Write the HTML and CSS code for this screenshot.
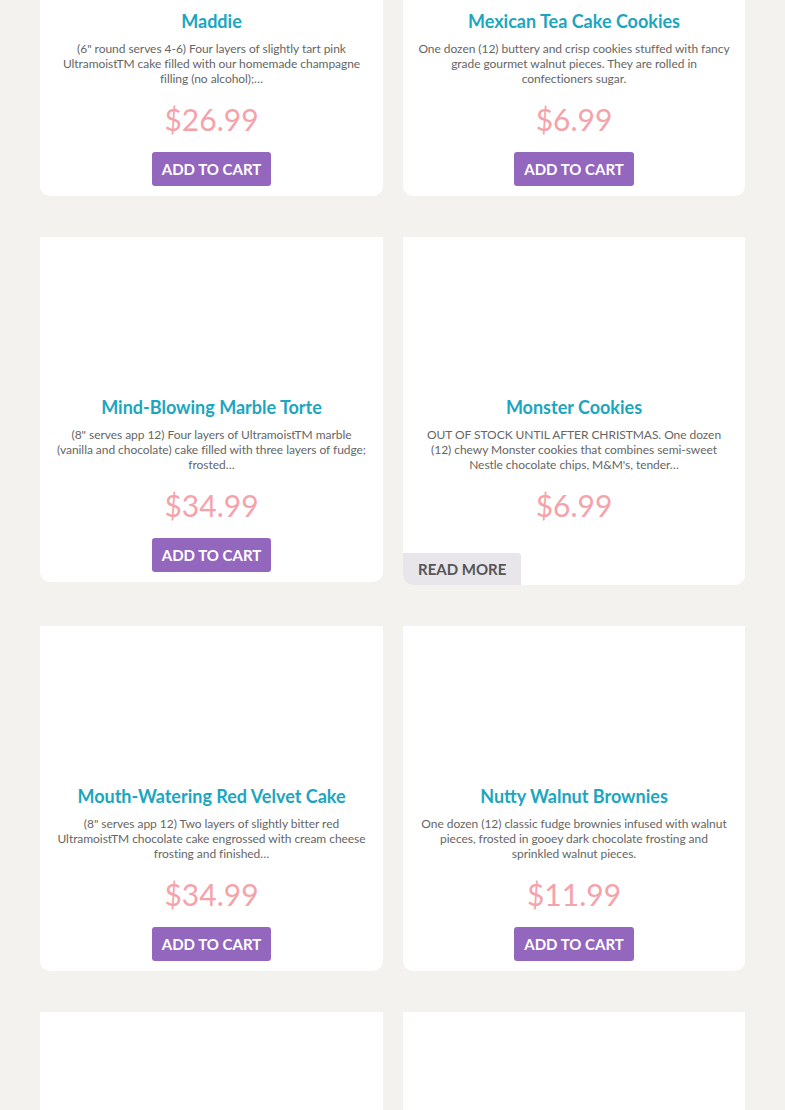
FILE: index.html
```html
<!DOCTYPE html>
<html>
<head>
<meta charset="utf-8">
<link rel="stylesheet" href="styles.css">
</head>
<body>
<div class="grid">
  <div class="card">
    <div class="thumb"></div>
    <h3 class="title">Maddie</h3>
    <p class="desc">(6" round serves 4-6) Four layers of slightly tart pink<br>UltramoistTM cake filled with our homemade champagne<br>filling (no alcohol);…</p>
    <div class="price">$26.99</div>
    <a class="btn cart">ADD TO CART</a>
  </div>
  <div class="card">
    <div class="thumb"></div>
    <h3 class="title">Mexican Tea Cake Cookies</h3>
    <p class="desc">One dozen (12) buttery and crisp cookies stuffed with fancy<br>grade gourmet walnut pieces. They are rolled in<br>confectioners sugar.</p>
    <div class="price">$6.99</div>
    <a class="btn cart">ADD TO CART</a>
  </div>
  <div class="card">
    <div class="thumb"></div>
    <h3 class="title">Mind-Blowing Marble Torte</h3>
    <p class="desc">(8" serves app 12) Four layers of UltramoistTM marble<br>(vanilla and chocolate) cake filled with three layers of fudge;<br>frosted…</p>
    <div class="price">$34.99</div>
    <a class="btn cart">ADD TO CART</a>
  </div>
  <div class="card">
    <div class="thumb"></div>
    <h3 class="title">Monster Cookies</h3>
    <p class="desc">OUT OF STOCK UNTIL AFTER CHRISTMAS. One dozen<br>(12) chewy Monster cookies that combines semi-sweet<br>Nestle chocolate chips, M&amp;M's, tender…</p>
    <div class="price">$6.99</div>
    <a class="btn more">READ MORE</a>
  </div>
  <div class="card">
    <div class="thumb"></div>
    <h3 class="title">Mouth-Watering Red Velvet Cake</h3>
    <p class="desc">(8" serves app 12) Two layers of slightly bitter red<br>UltramoistTM chocolate cake engrossed with cream cheese<br>frosting and finished…</p>
    <div class="price">$34.99</div>
    <a class="btn cart">ADD TO CART</a>
  </div>
  <div class="card">
    <div class="thumb"></div>
    <h3 class="title">Nutty Walnut Brownies</h3>
    <p class="desc">One dozen (12) classic fudge brownies infused with walnut<br>pieces, frosted in gooey dark chocolate frosting and<br>sprinkled walnut pieces.</p>
    <div class="price">$11.99</div>
    <a class="btn cart">ADD TO CART</a>
  </div>
  <div class="card tall">
    <div class="thumb"></div>
  </div>
  <div class="card tall">
    <div class="thumb"></div>
  </div>
</div>
</body>
</html>
```
FILE: styles.css
```css
html, body {
  margin: 0;
  padding: 0;
  background: #f3f2ef;
  font-family: Lato, "Open Sans", sans-serif;
  overflow: hidden;
}
.grid {
  display: grid;
  grid-template-columns: 343px 342px;
  column-gap: 20px;
  row-gap: 41px;
  align-items: start;
  margin: -149px 40px 0 40px;
}
.card {
  background: #fff;
  border-radius: 0 0 10px 10px;
  display: flex;
  flex-direction: column;
  align-items: center;
  padding-bottom: 10px;
}
.card.tall {
  height: 360px;
}
.thumb {
  height: 159px;
  align-self: stretch;
}
.title {
  margin: 0;
  font-size: 18px;
  line-height: 22px;
  font-weight: 700;
  color: #1ba6bf;
  text-align: center;
}
.desc {
  margin: 9px 0 0;
  padding: 0 6px;
  font-size: 12px;
  line-height: 15px;
  color: #666;
  text-align: center;
  letter-spacing: -0.05px;
  white-space: nowrap;
}
.price {
  margin-top: 15px;
  font-size: 30px;
  line-height: 36px;
  color: #f5a3aa;
}
.btn {
  display: block;
  font-size: 15px;
  font-weight: 700;
  text-decoration: none;
}
.cart {
  margin-top: 15px;
  height: 34px;
  line-height: 34px;
  padding: 0 10px;
  background: #9467bf;
  color: #fff;
  border-radius: 3px;
}
.more {
  align-self: flex-start;
  margin-top: 30px;
  margin-bottom: -10px;
  height: 32px;
  line-height: 32px;
  padding: 0 15px;
  background: #e8e6ea;
  color: #555;
  border-radius: 0 3px 0 10px;
}
```
